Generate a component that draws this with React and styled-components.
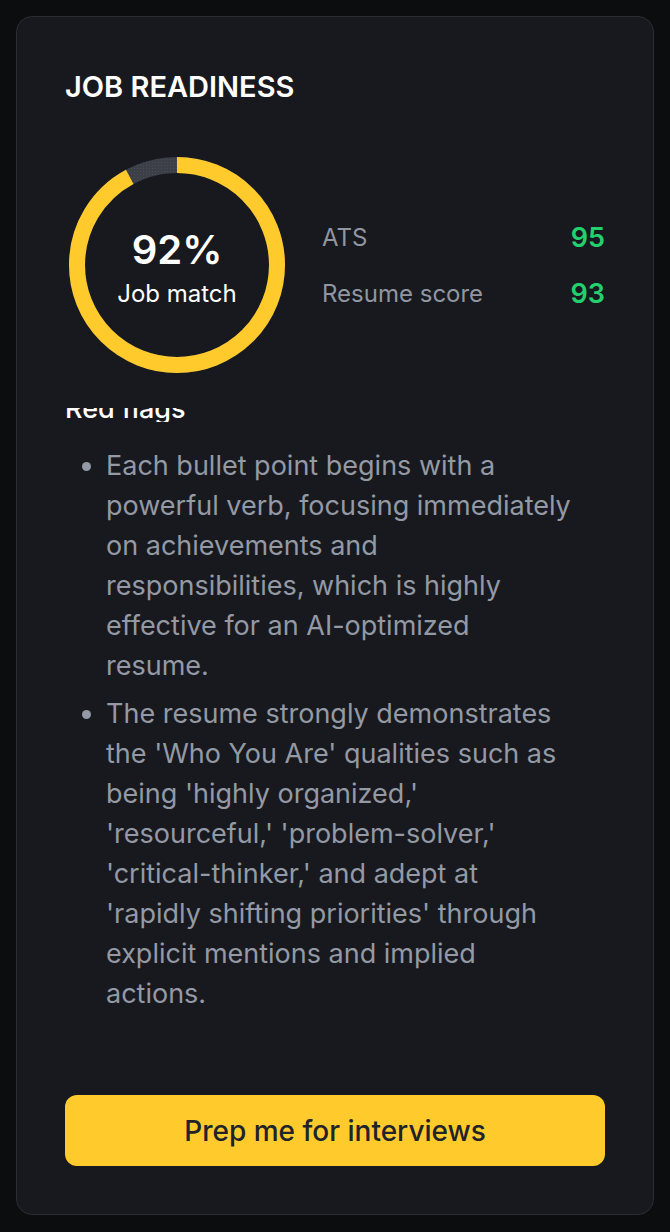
import React from 'react';
import styled, { createGlobalStyle } from 'styled-components';

const GlobalStyle = createGlobalStyle`
  html, body {
    margin: 0;
    padding: 0;
    background: #0c0d0f;
  }
  body {
    font-family: Inter, "Noto Sans", sans-serif;
  }
`;

const Page = styled.div`
  padding: 16px;
  min-height: 1232px;
  box-sizing: border-box;
`;

const Card = styled.section`
  background: #18191e;
  border: 1px solid #2b2d34;
  border-radius: 16px;
  padding: 52px 48px 48px 48px;
  box-sizing: border-box;
  min-height: 1199px;
  display: flex;
  flex-direction: column;
`;

const Title = styled.h2`
  margin: 0;
  color: #ffffff;
  font-size: 29px;
  line-height: 35px;
  font-weight: 600;
`;

const ScoreRow = styled.div`
  display: flex;
  align-items: center;
  gap: 33px;
  margin-top: 49px;
`;

const DonutWrap = styled.div`
  position: relative;
  width: 224px;
  height: 224px;
  flex-shrink: 0;
`;

const DonutCenter = styled.div`
  position: absolute;
  inset: 0;
  padding-top: 7px;
  display: flex;
  flex-direction: column;
  align-items: center;
  justify-content: center;
  color: #ffffff;
`;

const Percent = styled.div`
  font-size: 40px;
  line-height: 44px;
  font-weight: 600;
`;

const PercentLabel = styled.div`
  font-size: 24px;
  line-height: 30px;
  margin-top: 7px;
`;

const Stats = styled.div`
  flex: 1;
  display: flex;
  flex-direction: column;
  gap: 28px;
`;

const Stat = styled.div`
  display: flex;
  align-items: center;
  justify-content: space-between;
  height: 28px;
`;

const StatLabel = styled.span`
  color: #9096a1;
  font-size: 24px;
`;

const StatValue = styled.span`
  color: #22d06e;
  font-size: 27px;
  font-weight: 600;
`;

const HeadingClip = styled.div`
  margin-top: 31px;
  height: 14px;
  overflow: hidden;
`;

const Heading = styled.h3`
  margin: -13px 0 0 0;
  color: #ffffff;
  font-size: 27px;
  line-height: 27px;
  font-weight: 500;
`;

const List = styled.ul`
  margin: 24px 0 0 0;
  padding: 0 30px 0 41px;
  color: #9399a5;
  font-size: 27px;
  line-height: 40px;
`;

const Item = styled.li`
  & + & {
    margin-top: 8px;
  }
`;

const Button = styled.button`
  margin-top: auto;
  height: 71px;
  border: none;
  border-radius: 12px;
  background: #ffca2c;
  color: #20232a;
  font-family: Inter, "Noto Sans", sans-serif;
  font-size: 28px;
  font-weight: 500;
  cursor: pointer;
`;

function Donut({ value }) {
  const r = 100;
  const c = 2 * Math.PI * r;
  const filled = (value / 100) * c;
  return (
    <svg width="224" height="224" viewBox="0 0 224 224">
      <defs>
        <pattern id="dots" width="3" height="3" patternUnits="userSpaceOnUse">
          <rect width="3" height="3" fill="#3c3f47" />
          <rect width="1" height="1" fill="#4a4d55" />
        </pattern>
      </defs>
      <circle cx="112" cy="112" r={r} fill="none" stroke="url(#dots)" strokeWidth="16" />
      <circle
        cx="112"
        cy="112"
        r={r}
        fill="none"
        stroke="#ffca2c"
        strokeWidth="16"
        strokeDasharray={`${filled} ${c}`}
        transform="rotate(-90 112 112)"
      />
    </svg>
  );
}

const flags = [
  'Each bullet point begins with a powerful verb, focusing immediately on achievements and responsibilities, which is highly effective for an AI-optimized resume.',
  "The resume strongly demonstrates the 'Who You Are' qualities such as being 'highly organized,' 'resourceful,' 'problem-solver,' 'critical-thinker,' and adept at 'rapidly shifting priorities' through explicit mentions and implied actions.",
];

export default function App() {
  return (
    <Page>
      <GlobalStyle />
      <Card>
        <Title>JOB READINESS</Title>
        <ScoreRow>
          <DonutWrap>
            <Donut value={92} />
            <DonutCenter>
              <Percent>92%</Percent>
              <PercentLabel>Job match</PercentLabel>
            </DonutCenter>
          </DonutWrap>
          <Stats>
            <Stat>
              <StatLabel>ATS</StatLabel>
              <StatValue>95</StatValue>
            </Stat>
            <Stat>
              <StatLabel>Resume score</StatLabel>
              <StatValue>93</StatValue>
            </Stat>
          </Stats>
        </ScoreRow>
        <HeadingClip>
          <Heading>Red flags</Heading>
        </HeadingClip>
        <List>
          {flags.map((f, i) => (
            <Item key={i}>{f}</Item>
          ))}
        </List>
        <Button>Prep me for interviews</Button>
      </Card>
    </Page>
  );
}
